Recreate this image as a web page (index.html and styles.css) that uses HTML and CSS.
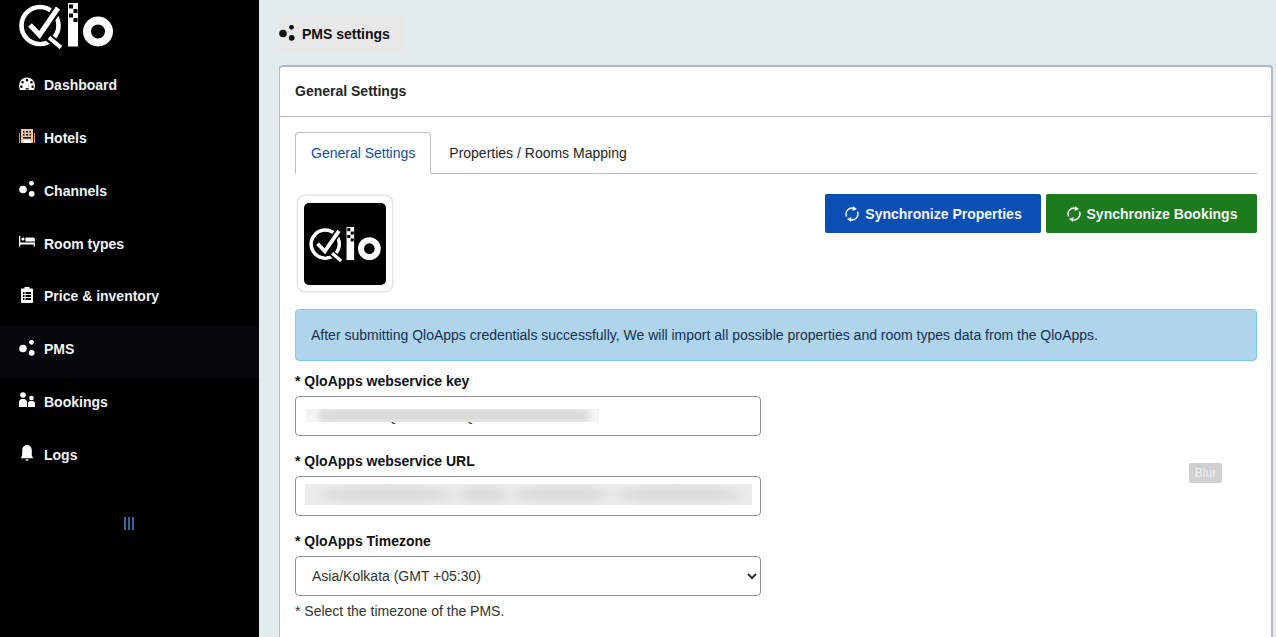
FILE: index.html
```html
<!DOCTYPE html>
<html lang="en">
<head>
<meta charset="utf-8">
<title>PMS settings</title>
<link rel="stylesheet" href="styles.css">
</head>
<body>
<svg class="defs" width="0" height="0" aria-hidden="true">
  <defs>
    <symbol id="logo" viewBox="19 3 94 46">
      <circle cx="40" cy="25.500" r="18.500" fill="none" stroke="#fff" stroke-width="4.600"/>
      <path d="M30 25l9.500 10L58 8" fill="none" stroke="#000" stroke-width="9.500"/>
      <path d="M30 25l9.500 10L58 8" fill="none" stroke="#fff" stroke-width="5"/>
      <path d="M47 36.500L60.500 47" fill="none" stroke="#000" stroke-width="8"/>
      <path d="M49 37.500L61 47.500" fill="none" stroke="#fff" stroke-width="4.200"/>
      <rect x="68" y="3" width="10" height="43.500" fill="#fff"/>
      <rect x="69" y="4.500" width="4" height="4" fill="#000"/>
      <rect x="73.500" y="9" width="4" height="4" fill="#000"/>
      <rect x="69" y="13.500" width="4" height="4" fill="#000"/>
      <rect x="73.500" y="18" width="4" height="4" fill="#000"/>
      <circle cx="98" cy="31.500" r="11" fill="none" stroke="#fff" stroke-width="8"/>
    </symbol>
    <symbol id="dots" viewBox="0 0 16 16">
      <circle cx="4" cy="8.500" r="3.800"/>
      <circle cx="12.500" cy="2.300" r="2.400"/>
      <circle cx="12.700" cy="12.800" r="2.900"/>
    </symbol>
    <symbol id="sync" viewBox="0 0 16 16">
      <path d="M2.600 10.500A6 6 0 0 1 10 2.400M13.400 5.500A6 6 0 0 1 6 13.600" fill="none" stroke="currentColor" stroke-width="1.500"/>
      <path d="M9 0l4 3-4.500 2zM7 16l-4-3 4.500-2z" fill="currentColor"/>
    </symbol>
  </defs>
</svg>

<div class="app">
  <aside class="sidebar">
    <div class="brand"><svg class="brand-logo"><use href="#logo"/></svg></div>
    <nav class="nav">
      <a class="nav-item">
        <svg class="nav-icon" viewBox="0 0 16 16"><path fill-rule="evenodd" d="M8 1.500a8 8 0 0 0-8 8c0 1.700.4 3.100 1 4.500h14c.6-1.400 1-2.800 1-4.500a8 8 0 0 0-8-8zM8 3a1.300 1.300 0 1 1 0 2.600A1.300 1.300 0 0 1 8 3zM3.500 5a1.300 1.300 0 1 1 0 2.600 1.300 1.300 0 0 1 0-2.600zm9 0a1.300 1.300 0 1 1 0 2.600 1.300 1.300 0 0 1 0-2.600zM2.400 9.500a1.300 1.300 0 1 1 0 2.600 1.300 1.300 0 0 1 0-2.600zm11.200 0a1.300 1.300 0 1 1 0 2.600 1.300 1.300 0 0 1 0-2.600zM10.500 6L9.300 10.200A2 2 0 1 1 6.200 12.300h3.600a2 2 0 0 0-.1-2.300z"/></svg>
        <span>Dashboard</span>
      </a>
      <a class="nav-item">
        <svg class="nav-icon" viewBox="0 0 16 16"><path class="hotel-wing" d="M0 5h1v10H0zM15 5h1v10h-1z"/><path class="hotel-body" fill-rule="evenodd" d="M2 1h12v14H2zM4 3v1.500h1.500V3zm3 0v1.500h2V3zm3.500 0v1.500H12V3zM4 6v1.500h1.500V6zm3 0v1.500h2V6zm3.500 0v1.500H12V6zM4 9v1.500h8V9z"/><path d="M4.500 12h7v3h-7z"/></svg>
        <span>Hotels</span>
      </a>
      <a class="nav-item">
        <svg class="nav-icon"><use href="#dots"/></svg>
        <span>Channels</span>
      </a>
      <a class="nav-item">
        <svg class="nav-icon" viewBox="0 0 16 16"><path d="M0 2h1.300v6.500H16V12.500h-1.400V10.500H1.300v2H0z"/><circle cx="4" cy="5" r="1.600"/><path d="M6.500 3.500h7.500a2 2 0 0 1 2 2v2H6.500z"/></svg>
        <span>Room types</span>
      </a>
      <a class="nav-item">
        <svg class="nav-icon" viewBox="0 0 16 16"><path fill-rule="evenodd" d="M5.500 0h5v1.500h2.800A.7.700 0 0 1 14 2.200v13.100a.7.700 0 0 1-.7.700H2.700a.7.700 0 0 1-.7-.7V2.200a.7.700 0 0 1 .7-.7h2.800zM4 5v2h1.500V5zm2.500 0v2H12V5zM4 8v2h1.500V8zm2.500 0v2H12V8zM4 11v2h1.500v-2zm2.500 0v2H12v-2z"/></svg>
        <span>Price &amp; inventory</span>
      </a>
      <a class="nav-item is-active">
        <svg class="nav-icon"><use href="#dots"/></svg>
        <span>PMS</span>
      </a>
      <a class="nav-item">
        <svg class="nav-icon" viewBox="0 0 16 16"><circle cx="4" cy="3" r="2.800"/><circle cx="12.500" cy="6" r="2.300"/><path d="M0 15v-4.500A3.500 3.500 0 0 1 3.500 7h1A3.500 3.500 0 0 1 8 10.500V15zM9 15v-3.500A2.500 2.500 0 0 1 11.500 9h2A2.500 2.500 0 0 1 16 11.500V15z"/></svg>
        <span>Bookings</span>
      </a>
      <a class="nav-item">
        <svg class="nav-icon" viewBox="0 0 16 16"><path d="M8 0c3 0 4.800 2.300 4.800 5.500V10c0 1 .7 2 1.700 3.300h-13C2.500 12 3.200 11 3.200 10V5.500C3.200 2.300 5 0 8 0z"/><path d="M6.500 14.200h3a1.500 1.500 0 0 1-3 0z"/></svg>
        <span>Logs</span>
      </a>
    </nav>
    <div class="collapse" aria-hidden="true"><i></i><i></i><i></i></div>
  </aside>

  <main class="main">
    <div class="crumb-row">
      <div class="crumb">
        <svg class="crumb-icon"><use href="#dots"/></svg>
        <span>PMS settings</span>
      </div>
    </div>

    <section class="card">
      <header class="card-head">General Settings</header>
      <div class="card-body">
        <div class="tabs">
          <a class="tab is-active">General Settings</a>
          <a class="tab">Properties / Rooms Mapping</a>
        </div>

        <div class="top-row">
          <div class="pms-logo"><div class="pms-logo-inner"><svg class="pms-logo-svg"><use href="#logo"/></svg></div></div>
          <div class="actions">
            <button class="btn btn-blue" type="button"><svg class="btn-icon"><use href="#sync"/></svg>Synchronize Properties</button>
            <button class="btn btn-green" type="button"><svg class="btn-icon"><use href="#sync"/></svg>Synchronize Bookings</button>
          </div>
        </div>

        <div class="alert">After submitting QloApps credentials successfully, We will import all possible properties and room types data from the QloApps.</div>

        <div class="field">
          <label class="label">* QloApps webservice key</label>
          <div class="control">
            <input class="input" type="text" value="&#160;&#160;&#160;&#160;&#160;&#160;&#160;&#160;&#160;&#160;&#160;&#160;&#160;&#160;&#160;&#160;&#160;&#160;&#160;Q&#160;&#160;&#160;&#160;&#160;&#160;&#160;&#160;&#160;&#160;&#160;&#160;&#160;&#160;&#160;&#160;&#160;Q">
            <div class="blur blur-key"><i class="b1"></i></div>
          </div>
        </div>
        <div class="field">
          <label class="label">* QloApps webservice URL</label>
          <div class="control">
            <input class="input" type="text">
            <div class="blur blur-url"><i class="u1"></i><i class="u2"></i><i class="u3"></i><i class="u4"></i></div>
          </div>
        </div>
        <div class="field">
          <label class="label">* QloApps Timezone</label>
          <div class="control">
            <select class="input select"><option>Asia/Kolkata (GMT +05:30)</option></select>
          </div>
          <p class="help">* Select the timezone of the PMS.</p>
        </div>
      </div>
      <span class="blur-tag">Blur</span>
    </section>
  </main>
</div>
</body>
</html>
```

FILE: styles.css
```css
* { box-sizing: border-box; }
html, body { margin: 0; height: 637px; overflow: hidden; }
body { font: 14px/20px "Liberation Sans", Arial, sans-serif; color: #212529; background: #e4ebef; }
.defs { position: absolute; }

.app { display: flex; height: 637px; }

.sidebar { width: 259px; flex: none; background: #000; color: #f1f4f6; }
.brand { height: 60.800px; padding: 3px 0 0 19px; }
.brand-logo { display: block; width: 94px; height: 46px; }
.nav { display: flex; flex-direction: column; }
.nav-item { display: flex; align-items: center; height: 52.800px; padding: 0 0 4px 19px; font-weight: 700; }
.nav-item.is-active { background: #05070a; }
.nav-icon { width: 16px; height: 16px; margin: 0 9px 3px 0; fill: #fff; flex: none; }
.hotel-body { fill: #efc3a2; }
.hotel-wing { fill: #f08c4a; }
.collapse { display: flex; justify-content: center; gap: 2.500px; margin-top: 34px; padding-right: 1px; }
.collapse i { width: 1.500px; height: 13px; background: #3a62a0; }

.main { flex: 1; min-width: 0; padding: 16px 3px 0 20px; }
.crumb-row { display: flex; height: 49px; }
.crumb { display: flex; align-items: center; height: 38px; padding: 0 15px 2px 0; background: #e8e8e8; font-weight: 700; color: #111; }
.crumb-icon { width: 16px; height: 16px; margin: 0 7px 3px 0; fill: #111; }

.card { position: relative; height: 600px; background: #fff; border: 2px solid #b4b9bf; border-width: 2px 2px 0 1px; border-radius: 4px 4px 0 0; }
.card-head { height: 50px; padding: 14px 15px; font-weight: 700; color: #212529; border-bottom: 1px solid #b4b9bf; }
.card-body { padding: 15px 14px 0 15px; }

.tabs { display: flex; height: 42px; border-bottom: 1px solid #bdbfc2; }
.tab { height: 42px; padding: 11px 18px 0; color: #212529; }
.tab.is-active { padding: 10px 15px 0; color: #0f4fa8; background: #fff; border: 1px solid #bdbfc2; border-bottom-color: #fff; border-radius: 4px 4px 0 0; }

.top-row { display: flex; justify-content: space-between; align-items: flex-start; padding-top: 20px; height: 135px; }
.pms-logo { width: 96px; height: 97px; margin: 1px 0 0 2px; padding: 7px 6px 6px; background: #fff; border: 1px solid #e6e6e6; border-radius: 8px; box-shadow: 0 0 2px rgba(0,0,0,.2); }
.pms-logo-inner { display: flex; align-items: center; justify-content: center; width: 82px; height: 82px; background: #000; border-radius: 5px; }
.pms-logo-svg { width: 72px; height: 35px; }
.actions { display: flex; gap: 5px; }
.btn { display: flex; align-items: center; justify-content: center; height: 39px; padding: 0; font: 700 14px/20px "Liberation Sans", Arial, sans-serif; white-space: nowrap; color: #f4f7fb; border: 0; border-radius: 2px; }
.btn-blue { width: 216px; background: #0a50b3; }
.btn-green { width: 211px; background: #1d7a1d; }
.btn-icon { flex: none; width: 16px; height: 16px; margin-right: 5px; color: #f4f7fb; }

.alert { height: 52px; padding: 15px; color: #14304f; background: #afd5ec; border: 1px solid #80cde0; border-radius: 4px; }

.field { margin-top: 9px; height: 71px; }
.label { display: block; height: 26px; padding-top: 1px; font-weight: 700; color: #111; }
.control { position: relative; width: 466px; }
.input { display: block; width: 466px; height: 40px; padding: 0 16px; font: 14px/20px "Liberation Sans", Arial, sans-serif; color: #333; background: #fff; border: 1px solid #919191; border-radius: 4px; }
.select { padding: 0 12px; }
.help { margin: 5px 0 0; color: #333; }

.blur { position: absolute; display: flex; overflow: hidden; background: #f3f4f3; }
.blur i { display: block; background: #d8dad8; filter: blur(3px); }
.blur-key { left: 11px; top: 13px; width: 293px; height: 13px; padding: 0 10px 0 12px; }
.b1 { flex: 1; border-radius: 6px; }
.blur-url { left: 10px; top: 8px; width: 447px; height: 21px; align-items: center; gap: 6px; padding: 0 8px 0 14px; background: #ebecec; }
.blur-url i { height: 15px; border-radius: 50%; background: #d9dbd9; filter: blur(4px); }
.u1 { width: 134px; }
.u2 { width: 48px; }
.u3 { width: 96px; }
.u4 { flex: 1; }

.blur-tag { position: absolute; left: 909px; top: 396px; width: 33px; height: 20px; font-size: 12px; line-height: 20px; text-align: center; color: #eee; background: #d0d0d0; border-radius: 2px; }
```
